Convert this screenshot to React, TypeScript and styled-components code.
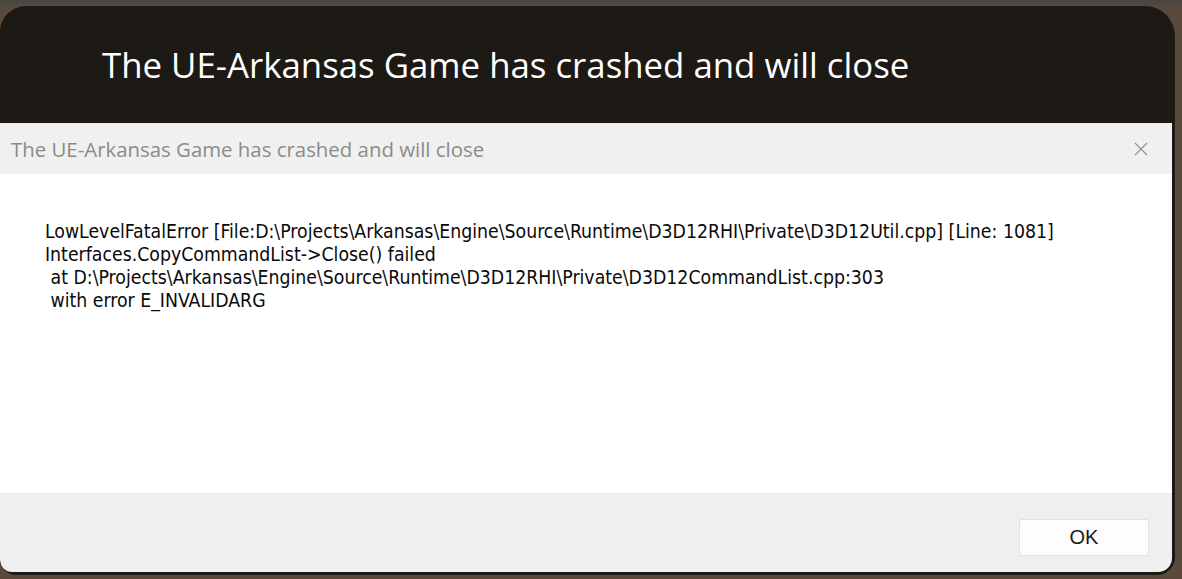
import React from "react";
import styled, { createGlobalStyle } from "styled-components";

const Global = createGlobalStyle`
  html, body { margin: 0; padding: 0; background: #5a4a3b; overflow: hidden; }
  #root { width: 1182px; height: 579px; }
`;

const Desk = styled.div`
  width: 1182px;
  height: 579px;
  box-sizing: border-box;
  padding-top: 6px;
  background: linear-gradient(180deg, #4a4640 0px, #504a42 6px, #5a4a3b 7px, #5a4a3b 100%);
`;

const Win = styled.div`
  width: 1175px;
  height: 569px;
  box-sizing: border-box;
  background: #1d1915;
  border-radius: 26px 30px 18px 16px;
  display: flex;
  flex-direction: column;
  padding: 0 3px 3px 0;
  overflow: hidden;
`;

const Header = styled.div`
  height: 117px;
  flex: none;
  display: flex;
  align-items: center;
  padding-left: 102px;
  box-sizing: border-box;
`;

const HeaderTitle = styled.h1`
  margin: 0;
  color: #ffffff;
  font-family: "Open Sans", "Noto Sans", sans-serif;
  font-weight: 400;
  font-size: 34.8px;
  line-height: 1;
  padding-top: 2px;
`;

const Dialog = styled.div`
  flex: 1;
  display: flex;
  flex-direction: column;
  border-radius: 0 0 14px 12px;
  overflow: hidden;
`;

const TitleBar = styled.div`
  height: 51px;
  flex: none;
  background: #f0f0f0;
  display: flex;
  align-items: center;
  justify-content: space-between;
  padding: 0 24px 0 11px;
`;

const TitleText = styled.span`
  color: #8b8b8b;
  font-family: "Open Sans", "Noto Sans", sans-serif;
  font-size: 20.4px;
  padding-top: 1px;
`;

const CloseBtn = styled.div`
  width: 14px;
  height: 14px;
  display: flex;
  align-items: center;
  justify-content: center;
`;

const Body = styled.div`
  height: 319px;
  flex: none;
  background: #ffffff;
  box-sizing: border-box;
  padding: 46px 0 0 45px;
`;

const Message = styled.pre`
  margin: 0;
  color: #0a0a0a;
  font-family: "DejaVu Sans Condensed", "DejaVu Sans", sans-serif;
  font-size: 19.3px;
  line-height: 23px;
  white-space: pre;
`;

const Footer = styled.div`
  flex: 1;
  background: #efefef;
  border-top: 1px solid #e9e9e9;
  display: flex;
  justify-content: flex-end;
  align-items: flex-start;
  padding: 25px 23px 0 0;
`;

const OkButton = styled.button`
  width: 130px;
  height: 37px;
  background: #fdfdfd;
  border: 1px solid #e2e2e2;
  border-radius: 2px;
  font-family: "Liberation Sans", Arial, sans-serif;
  font-size: 20px;
  color: #1a1a1a;
  padding: 0;
`;

const lines = [
  "LowLevelFatalError [File:D:\\Projects\\Arkansas\\Engine\\Source\\Runtime\\D3D12RHI\\Private\\D3D12Util.cpp] [Line: 1081]",
  "Interfaces.CopyCommandList->Close() failed",
  " at D:\\Projects\\Arkansas\\Engine\\Source\\Runtime\\D3D12RHI\\Private\\D3D12CommandList.cpp:303",
  " with error E_INVALIDARG",
];

export default function App() {
  return (
    <>
      <Global />
      <Desk>
        <Win>
          <Header>
            <HeaderTitle>The UE-Arkansas Game has crashed and will close</HeaderTitle>
          </Header>
          <Dialog>
            <TitleBar>
              <TitleText>The UE-Arkansas Game has crashed and will close</TitleText>
              <CloseBtn>
                <svg width="14" height="14" viewBox="0 0 14 14">
                  <path d="M1 1 L13 13 M13 1 L1 13" stroke="#8e8e8e" strokeWidth="1.1" fill="none" />
                </svg>
              </CloseBtn>
            </TitleBar>
            <Body>
              <Message>{lines.join("\n")}</Message>
            </Body>
            <Footer>
              <OkButton>OK</OkButton>
            </Footer>
          </Dialog>
        </Win>
      </Desk>
    </>
  );
}
